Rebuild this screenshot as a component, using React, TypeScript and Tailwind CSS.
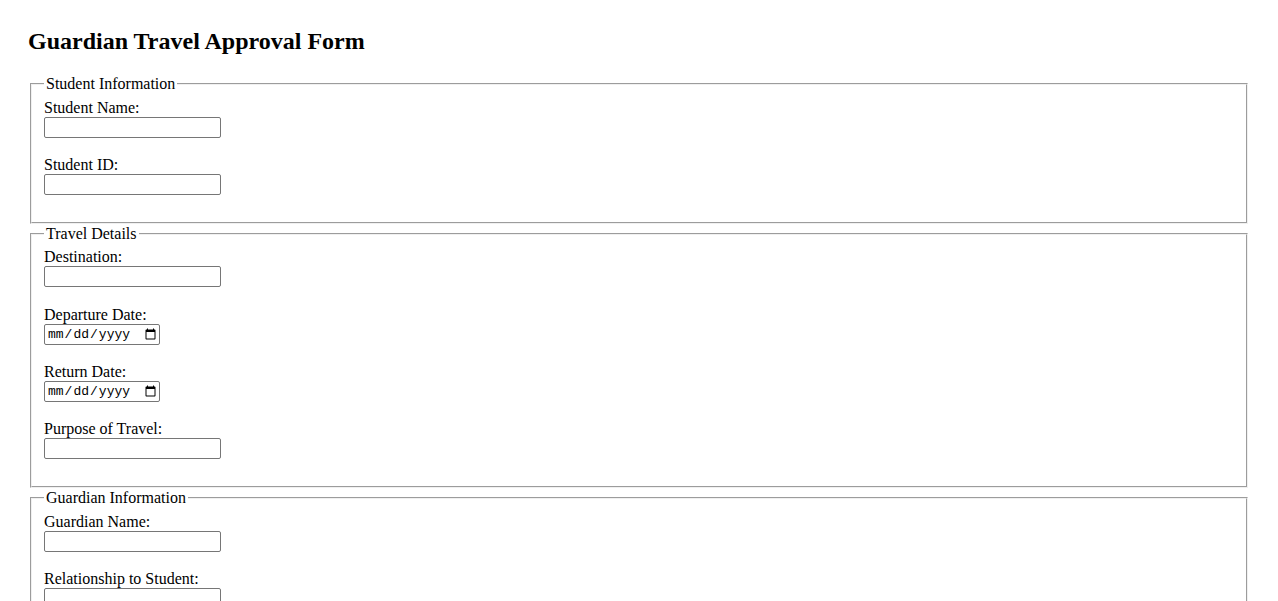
import React from 'react';

interface Field {
    label: string;
    type: 'text' | 'date';
}

interface Section {
    legend: string;
    fields: Field[];
}

const sections: Section[] = [
    {
        legend: 'Student Information',
        fields: [
            { label: 'Student Name:', type: 'text' },
            { label: 'Student ID:', type: 'text' },
        ],
    },
    {
        legend: 'Travel Details',
        fields: [
            { label: 'Destination:', type: 'text' },
            { label: 'Departure Date:', type: 'date' },
            { label: 'Return Date:', type: 'date' },
            { label: 'Purpose of Travel:', type: 'text' },
        ],
    },
    {
        legend: 'Guardian Information',
        fields: [
            { label: 'Guardian Name:', type: 'text' },
            { label: 'Relationship to Student:', type: 'text' },
            { label: 'Contact Number:', type: 'text' },
            { label: 'Email Address:', type: 'text' },
        ],
    },
];

const App = () => {
    return (
        <div className="min-h-screen bg-white px-[28px] pt-[28px] pb-[28px] font-['Liberation_Serif','Times_New_Roman',serif] text-[16px] leading-[normal] text-black">
            <h2 className="mb-[20px] text-[24px] font-bold">Guardian Travel Approval Form</h2>
            <form>
                {sections.map((section) => (
                    <fieldset
                        key={section.legend}
                        className="mx-[2px] mb-[1px] border-2 border-[#f0f0f0] px-[12px] pt-[5.5px] pb-[8.5px] [border-style:groove]"
                    >
                        <legend className="px-[2px]">{section.legend}</legend>
                        {section.fields.map((field) => (
                            <div key={field.label} className="mb-[18.4px]">
                                <label className="block">{field.label}</label>
                                {field.type === 'date' ? (
                                    <input
                                        type="date"
                                        className="block h-[21px] w-[116px] rounded-[2px] border border-[#767676] pl-[2px] font-['Liberation_Mono',monospace] text-[13px]"
                                    />
                                ) : (
                                    <input
                                        type="text"
                                        className="block h-[21px] w-[177px] rounded-[2px] border border-[#767676] px-[2px] font-['Liberation_Sans',Arial,sans-serif] text-[13.33px]"
                                    />
                                )}
                            </div>
                        ))}
                    </fieldset>
                ))}
                <div className="mt-[16px]">
                    <input type="checkbox" id="approve" className="mr-[4px]" />
                    <label htmlFor="approve">I approve this travel request.</label>
                </div>
            </form>
        </div>
    );
};

export default App;
